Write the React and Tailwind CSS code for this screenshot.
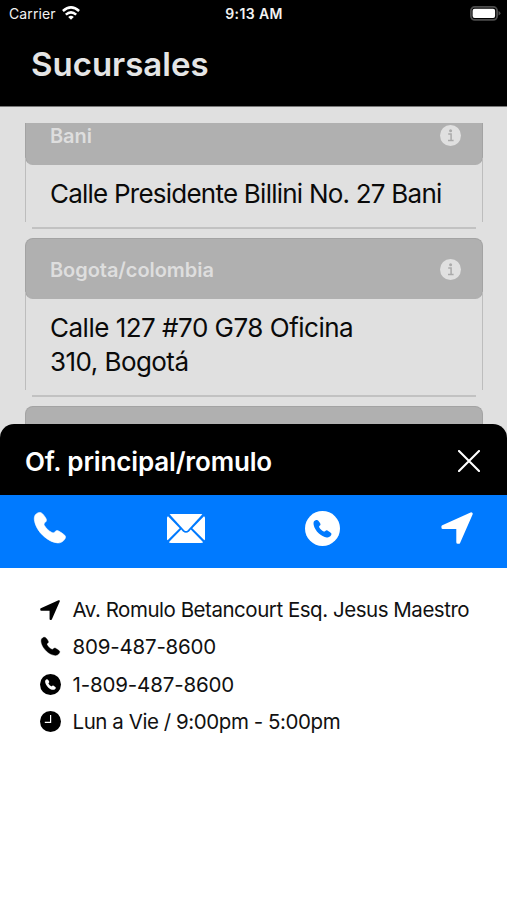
import React from "react";

const branches = [
  {
    name: "Bani",
    lines: [{ text: "Calle Presidente Billini No. 27 Bani", tracking: "tracking-[-0.77px]" }],
  },
  {
    name: "Bogota/colombia",
    lines: [
      { text: "Calle 127 #70 G78 Oficina", tracking: "tracking-[-0.5px]" },
      { text: "310, Bogotá", tracking: "tracking-[-0.55px]" },
    ],
  },
  { name: "", lines: [] },
];

const PHONE =
  "M1.2 3C3 .8 5.2-.2 7.4.9 9.200 2 10.900 4.600 12 6.600c.8 1.500.5 2.700-.7 3.700-1.400 1.200-1.600 1.900-.9 3.200 1.700 2.900 4.500 5.600 7.600 7.100 1.200.5 1.800.3 2.800-.7 1.500-1.500 2.500-1.700 4.200-.7 2 1.100 4 2.500 5.700 4 1.200 1.100.9 2.600.1 3.900-1.600 2.500-4.200 4.200-7.300 3.800C14 30.300 2.600 19.600.6 9.400.1 7 .1 4.800 1.200 3Z";

function PhoneIcon({ className }) {
  return (
    <svg viewBox="0 0 32 32" className={className} fill="currentColor" stroke="currentColor" strokeWidth=".6" overflow="visible">
      <path d={PHONE} />
    </svg>
  );
}

function ArrowIcon({ className }) {
  return (
    <svg viewBox="0 0 32 32" className={className} fill="currentColor" stroke="currentColor" strokeWidth="3" strokeLinejoin="round">
      <path d="M30.200 1.800 1.900 14.600v1H15.300q1.500 0 1.500 1.500v13.200h.9Z" />
    </svg>
  );
}

function PhoneCircleIcon({ className }) {
  return (
    <svg viewBox="0 0 36 36" className={className}>
      <circle cx="18" cy="18" r="18" fill="currentColor" />
      <path d={PHONE} className="fill-(--hole)" transform="translate(8.600 8.900) scale(.59)" />
    </svg>
  );
}

function MailIcon({ className }) {
  return (
    <svg viewBox="0 0 38 29" className={className} fill="currentColor">
      <path d="M2.600.3Q3 0 4 0h30q1 0 1.400.3L20.800 16.200q-1.800 1.800-3.600 0Z" />
      <path d="M1 2.200 12.700 14.200.6 26.300Q0 26 0 25V4q0-1 1-1.800ZM37 2.200 25.300 14.200l12.100 12.100q.6-.3.6-1.300V4q0-1-1-1.800Z" />
      <path d="m14.200 15.600 1.700 1.900q3.100 2.700 6.200 0l1.700-1.900 12.400 12.700q-.8.7-2.200.7H4q-1.400 0-2.200-.7Z" />
    </svg>
  );
}

function ClockIcon({ className }) {
  return (
    <svg viewBox="0 0 21 21" className={className}>
      <circle cx="10.5" cy="10.5" r="10.5" fill="currentColor" />
      <path d="M10.600 4v7.300H4.800" fill="none" stroke="#fff" strokeWidth="1.200" />
    </svg>
  );
}

function InfoIcon() {
  return (
    <svg viewBox="0 0 21 21" className="w-[21px] h-[21px]">
      <circle cx="10.5" cy="10.5" r="10.5" fill="#e0e0e0" />
      <circle cx="10.6" cy="5.7" r="1.5" fill="#aaa" />
      <path d="M8.200 8.900h2.900v6.300M8 15.500h5.600" fill="none" stroke="#aaa" strokeWidth="1.5" />
    </svg>
  );
}

function StatusBar() {
  return (
    <div className="h-[26px] pl-[9px] pr-[6px] grid grid-cols-[1fr_auto_1fr] items-center text-[#f2f2f2]">
      <div className="flex items-center gap-[6px]">
        <span className="text-[14px] tracking-[0.1px]">Carrier</span>
        <svg viewBox="0 0 18 14" className="w-[18px] h-[14px] -mt-px" fill="none" stroke="#fff" strokeWidth="2.5">
          <path d="M.9 5Q9-2.300 17.100 5M3.800 8.600q5.200-4.500 10.400 0" />
          <path d="M9 13.700 6.200 10.900q2.800-2.300 5.600 0Z" fill="#fff" stroke="none" />
        </svg>
      </div>
      <span className="text-center text-[14px] font-semibold tracking-[0.4px] -ml-[2px]">9:13 AM</span>
      <svg viewBox="0 0 31 15" className="w-[31px] h-[15px] justify-self-end">
        <rect x=".9" y=".9" width="26.2" height="13" rx="3.8" fill="none" stroke="#4d4d4d" strokeWidth="1.8" />
        <rect x="2.6" y="2.7" width="22.5" height="9.3" rx="2" fill="#fff" />
        <path d="M28.500 5v4.500q2-.8 2-2.250T28.500 5Z" fill="#4d4d4d" />
      </svg>
    </div>
  );
}

function BranchCard({ branch }) {
  return (
    <div className="mb-[9px]">
      <div className="h-[61px] pt-px pl-[24px] pr-[21px] flex items-center justify-between rounded-lg bg-[#b0b0b0] border border-[#a3a3a3] border-b-[#b0b0b0]">
        <span className="pt-px text-[20px] font-semibold tracking-[-0.06px] text-[#dedede]">{branch.name}</span>
        <InfoIcon />
      </div>
      {/* side borders stop short of the bottom line, leaving the corners open */}
      <div className="-mt-[7px] pt-[19px] pb-[11px] pl-[24px] border-x border-[#bdbdbd] text-[26px] leading-[34px] text-[#0a0a0a]">
        {branch.lines.map((line) => (
          <p key={line.text} className={`whitespace-nowrap ${line.tracking}`}>{line.text}</p>
        ))}
      </div>
      <div className="mx-[7px] h-[7px] border-b-2 border-[#c2c2c2]" />
    </div>
  );
}

const contactRows = [
  {
    icon: <ArrowIcon className="w-5 h-5" />,
    text: "Av. Romulo Betancourt Esq. Jesus Maestro",
    tracking: "tracking-[-0.47px]",
  },
  { icon: <PhoneIcon className="w-[19px] h-[19px] ml-px" />, text: "809-487-8600", tracking: "tracking-[-0.2px]" },
  { icon: <PhoneCircleIcon className="w-[21px] h-[21px]" />, text: "1-809-487-8600", tracking: "tracking-[-0.15px]" },
  { icon: <ClockIcon className="w-[21px] h-[21px]" />, text: "Lun a Vie / 9:00pm - 5:00pm", tracking: "tracking-[-0.44px]" },
];

function BranchSheet() {
  return (
    <section className="absolute inset-x-0 bottom-0 h-[476px] bg-white rounded-t-[14px] overflow-hidden">
      <header className="h-[71px] pt-[3px] pl-[25px] pr-[27px] bg-black text-white flex items-center justify-between">
        <h2 className="text-[26px] font-semibold tracking-[-0.15px]">Of. principal/romulo</h2>
        <button aria-label="Cerrar">
          <svg viewBox="0 0 22 22" className="w-[22px] h-[22px]" stroke="#fff" strokeWidth="2.1" strokeLinecap="round">
            <path d="m1 1 20 20M21 1 1 21" />
          </svg>
        </button>
      </header>
      <div className="h-[73px] pb-[7px] pl-[34px] pr-[34px] bg-[#007aff] text-white flex items-center justify-between [--hole:#007aff]">
        <PhoneIcon className="w-8 h-8" />
        <MailIcon className="w-[38px] h-[29px]" />
        <PhoneCircleIcon className="w-[35px] h-[35px]" />
        <ArrowIcon className="w-8 h-8" />
      </div>
      <ul className="pt-[23px] pl-[40px] text-[20.5px] leading-[37px] text-[#111] [--hole:#fff]">
        {contactRows.map((row) => (
          <li key={row.text} className={`flex items-center h-[37.3px] whitespace-nowrap ${row.tracking}`}>
            <span className="w-[32.5px] text-black">{row.icon}</span>
            {row.text}
          </li>
        ))}
      </ul>
    </section>
  );
}

export default function App() {
  return (
    <div className="relative w-full h-[900px] overflow-hidden bg-[#e0e0e0] font-['Inter','Liberation_Sans',sans-serif]">
      <header className="h-[107px] bg-black border-b border-[#777]">
        <StatusBar />
        <h1 className="pl-[31px] pt-[13px] text-[33px] leading-[50px] font-semibold text-[#e5e5e5]">
          Sucursales
        </h1>
      </header>
      <main className="mt-4 pl-[25px] pr-[24px] overflow-hidden">
        <div className="-mt-[19px]">
          {branches.map((branch, i) => (
            <BranchCard key={i} branch={branch} />
          ))}
        </div>
      </main>
      <BranchSheet />
    </div>
  );
}
